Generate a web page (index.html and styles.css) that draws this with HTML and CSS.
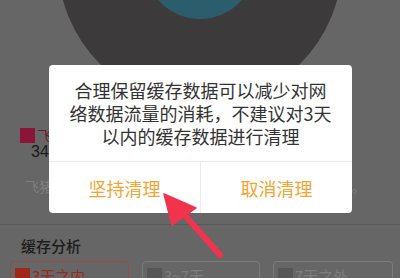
FILE: index.html
```html
<!DOCTYPE html>
<html lang="zh-CN">
<head>
<meta charset="utf-8">
<title>缓存清理</title>
<link rel="stylesheet" href="styles.css">
</head>
<body>
<div class="page">
  <svg class="chart" width="400" height="124" viewBox="0 0 400 124">
    <circle cx="200" cy="-37" r="142" fill="#3c3a3a"/>
    <circle cx="200" cy="-37" r="56" fill="#2c5d6c"/>
  </svg>
  <div class="legend">
    <div class="legend-item">
      <div class="legend-head"><span class="swatch swatch-red"></span><span class="legend-name">飞猪旅行</span></div>
      <div class="legend-value">34.5MB</div>
    </div>
    <div class="legend-item">
      <div class="legend-head"><span class="swatch swatch-teal"></span><span class="legend-name">其他</span></div>
      <div class="legend-value">12.1MB</div>
    </div>
  </div>
  <p class="desc">飞猪旅行的缓存主要包括图片、酒店与机票页面价格。</p>
  <section class="analysis">
    <h2 class="analysis-title">缓存分析</h2>
    <div class="ranges">
      <div class="range range-active"><span class="range-swatch"></span>3天之内</div>
      <div class="range"><span class="range-swatch"></span>3~7天</div>
      <div class="range"><span class="range-swatch"></span>7天之外</div>
    </div>
  </section>
</div>

<div class="dialog">
  <div class="dialog-msg">合理保留缓存数据可以减少对网<br>络数据流量的消耗，不建议对3天<br>以内的缓存数据进行清理</div>
  <div class="dialog-actions">
    <div class="dialog-btn">坚持清理</div>
    <div class="dialog-btn">取消清理</div>
  </div>
</div>

<svg class="arrow" width="400" height="278" viewBox="0 0 400 278">
  <line x1="183" y1="213" x2="220" y2="255" stroke="#f2334d" stroke-width="6" stroke-linecap="round"/>
  <polygon points="164,194 196,208 172,225" fill="#f2334d" stroke="#f2334d" stroke-width="1.5" stroke-linejoin="round"/>
</svg>
</body>
</html>
```

FILE: styles.css
```css
* { box-sizing: border-box; }
html, body {
  margin: 0;
  padding: 0;
}
body {
  width: 400px;
  height: 278px;
  overflow: hidden;
  background: #666666;
  font-family: "Noto Sans CJK SC", "Noto Sans", sans-serif;
  position: relative;
}
.page {
  display: flex;
  flex-direction: column;
}
.chart {
  display: block;
}
.legend {
  display: flex;
  gap: 0;
  margin-top: 4px;
  padding-left: 20px;
}
.legend-item {
  width: 120px;
  display: flex;
  flex-direction: column;
}
.legend-head {
  display: flex;
  align-items: center;
  height: 15px;
  gap: 2px;
}
.swatch {
  width: 15px;
  height: 15px;
  display: block;
}
.swatch-red { background: #8a1538; }
.swatch-teal { background: #2c5d6c; }
.legend-name {
  font-size: 14px;
  line-height: 15px;
  color: #6e1a2e;
}
.legend-value {
  margin-left: 11px;
  margin-top: 0;
  font-family: "Liberation Sans", "Noto Sans CJK SC", sans-serif;
  font-size: 16px;
  line-height: 18px;
  color: #1a1a1a;
}
.desc {
  margin: 15px 0 0 25px;
  font-size: 14px;
  line-height: 20px;
  letter-spacing: 0.2px;
  color: #7e7e7e;
  white-space: nowrap;
}
.analysis {
  margin-top: 28px;
  border-top: 1px solid #5a5a5a;
  padding-top: 10px;
}
.analysis-title {
  margin: 0 0 0 21px;
  font-size: 15px;
  line-height: 21px;
  font-weight: 500;
  color: #1c1c1c;
}
.ranges {
  display: grid;
  grid-template-columns: 119px 118px 120px;
  column-gap: 13px;
  margin: 5px 0 0 10px;
}
.range {
  height: 30px;
  border: 1px solid #7c7c7c;
  border-radius: 4px;
  padding: 5px 0 0 4px;
  display: flex;
  align-items: flex-start;
  gap: 2px;
  font-size: 15px;
  line-height: 17px;
  color: #7d7d7d;
}
.range-swatch {
  width: 15px;
  height: 15px;
  background: #565656;
  display: block;
  margin-top: 1px;
}
.range-active {
  border-color: #9a4b42;
  color: #9b2b20;
}
.range-active .range-swatch {
  background: #a02818;
}

.dialog {
  position: absolute;
  left: 49px;
  top: 65px;
  width: 303px;
  background: #ffffff;
  border-radius: 4px;
  overflow: hidden;
}
.dialog-msg {
  padding: 14px 0 13px;
  font-size: 18px;
  line-height: 23px;
  text-align: center;
  color: #333333;
}
.dialog-actions {
  display: flex;
  border-top: 1px solid #ebebeb;
}
.dialog-btn {
  flex: 1;
  height: 51px;
  display: flex;
  align-items: center;
  justify-content: center;
  font-size: 18px;
  color: #f2a531;
}
.dialog-btn + .dialog-btn {
  border-left: 1px solid #ebebeb;
}
.arrow {
  position: absolute;
  left: 0;
  top: 0;
  pointer-events: none;
}
```
